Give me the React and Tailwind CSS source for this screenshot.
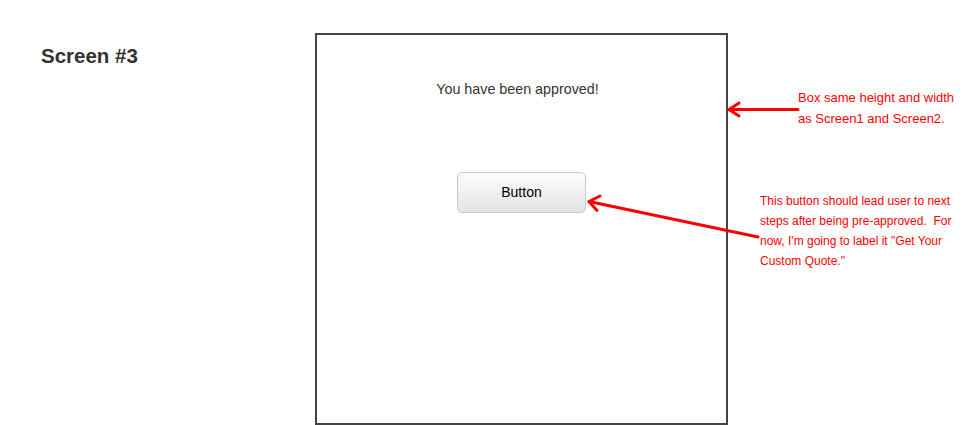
import React from 'react';

function Arrows() {
  return (
    <svg
      className="absolute inset-0 pointer-events-none"
      width="977"
      height="425"
      viewBox="0 0 977 425"
      fill="none"
      stroke="#ff0000"
      strokeWidth="3"
      strokeLinecap="round"
      strokeLinejoin="round"
    >
      {/* box size note */}
      <path d="M798 109.5 L729 109.5" />
      <path d="M739 103 L729 109.5 L739 116" />
      {/* button note */}
      <path d="M758 237 L589 201.5" />
      <path d="M600 196 L589 201.5 L597 210.5" />
    </svg>
  );
}

export default function App() {
  return (
    <div className="relative w-[977px] h-[425px] bg-white overflow-hidden flex font-['Liberation_Sans',Arial,sans-serif]">
      <div className="w-[315px] shrink-0 pl-[41px] pt-[44px]">
        <h1 className="text-[20.5px] leading-[23px] font-bold text-[#333]">Screen #3</h1>
      </div>

      <div className="mt-[33px] w-[413px] h-[392px] shrink-0 border-2 border-[#444] flex flex-col items-center">
        <p className="mt-[46px] mr-[8px] text-[14.3px] leading-[16px] text-[#333]">You have been approved!</p>
        <button className="mt-[75px] w-[129px] h-[41px] rounded-[5px] border border-[#c9c9c9] bg-gradient-to-b from-[#fcfcfc] to-[#e4e4e4] text-[14px] text-black">
          Button
        </button>
      </div>

      <div className="flex-1 flex flex-col text-[#ff0000]">
        <div className="mt-[87px] ml-[70px] text-[13px] leading-[21px]">
          <div>Box same height and width</div>
          <div>as Screen1 and Screen2.</div>
        </div>
        <div className="mt-[62px] ml-[32px] text-[12px] leading-[20px] whitespace-pre">
          <div>This button should lead user to next</div>
          <div>steps after being pre-approved.  For</div>
          <div>now, I'm going to label it "Get Your</div>
          <div>Custom Quote."</div>
        </div>
      </div>

      <Arrows />
    </div>
  );
}
